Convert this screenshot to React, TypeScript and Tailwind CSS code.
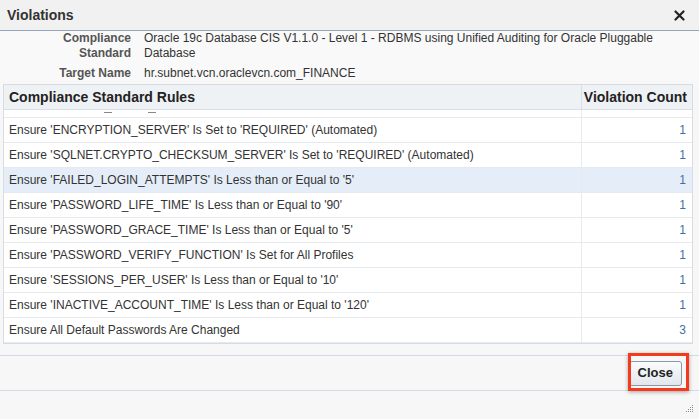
import React from 'react';

const RULES: { text: string; count: number; active?: boolean }[] = [
  { text: "Ensure 'ENCRYPTION_SERVER' Is Set to 'REQUIRED' (Automated)", count: 1 },
  { text: "Ensure 'SQLNET.CRYPTO_CHECKSUM_SERVER' Is Set to 'REQUIRED' (Automated)", count: 1 },
  { text: "Ensure 'FAILED_LOGIN_ATTEMPTS' Is Less than or Equal to '5'", count: 1, active: true },
  { text: "Ensure 'PASSWORD_LIFE_TIME' Is Less than or Equal to '90'", count: 1 },
  { text: "Ensure 'PASSWORD_GRACE_TIME' Is Less than or Equal to '5'", count: 1 },
  { text: "Ensure 'PASSWORD_VERIFY_FUNCTION' Is Set for All Profiles", count: 1 },
  { text: "Ensure 'SESSIONS_PER_USER' Is Less than or Equal to '10'", count: 1 },
  { text: "Ensure 'INACTIVE_ACCOUNT_TIME' Is Less than or Equal to '120'", count: 1 },
  { text: 'Ensure All Default Passwords Are Changed', count: 3 },
];

function Row({ text, count, active }: { text: string; count: number; active?: boolean }) {
  return (
    <div
      className={`grid h-[25px] grid-cols-[578px_1fr] border-b border-[#e6e9ed] text-[12px] ${
        active ? 'bg-[#e5eef8]' : 'bg-white'
      }`}
    >
      <div className="flex items-center border-r border-[#e6e9ed] pl-[5px] text-[#333]">{text}</div>
      <div className="flex items-center justify-end pr-[6px] text-[#3f6ea6]">{count}</div>
    </div>
  );
}

export default function App() {
  return (
    <div className="relative h-[419px] w-[699px] overflow-hidden bg-[#f7f7f7] font-['Liberation_Sans',Arial,sans-serif]">
      {/* title bar */}
      <div className="flex h-[31px] items-center justify-between border-b border-[#93a8bf] bg-[#f1f1f1] pl-[7px] pr-[14px]">
        <span className="text-[14px] font-bold text-[#333]">Violations</span>
        <svg width="11" height="11" viewBox="0 0 11 11">
          <path d="M1.5 1.5 L9.5 9.5 M9.5 1.5 L1.5 9.5" stroke="#222" strokeWidth="2.2" strokeLinecap="round" />
        </svg>
      </div>

      {/* info */}
      <div className="grid grid-cols-[131px_1fr] gap-x-[13px] gap-y-[5px] bg-[#f9f9f9] pr-[40px] text-[12px] leading-[15px]">
        <div className="text-right font-bold text-[#555]">
          Compliance
          <br />
          Standard
        </div>
        <div className="text-[#333]">
          Oracle 19c Database CIS V1.1.0 - Level 1 - RDBMS using Unified Auditing for Oracle Pluggable Database
        </div>
        <div className="text-right font-bold text-[#555]">Target Name</div>
        <div className="text-[#333]">hr.subnet.vcn.oraclevcn.com_FINANCE</div>
      </div>

      {/* table */}
      <div className="ml-[3px] mt-[3px] w-[690px] border border-[#d5dce4] bg-white">
        <div className="grid h-[25px] grid-cols-[578px_1fr] border-b border-[#d9dfe6] bg-[#eff2f5] text-[14px] font-bold text-[#222]">
          <div className="flex items-center border-r border-[#d9dfe6] pl-[5px]">Compliance Standard Rules</div>
          <div className="flex items-center justify-end pr-[5px]">Violation Count</div>
        </div>
        <div className="h-[233px] overflow-hidden">
          {/* bottom of the row scrolled out of view */}
          <div className="grid h-[8px] grid-cols-[578px_1fr] border-b border-[#e6e9ed]">
            <div className="relative border-r border-[#e6e9ed]">
              <span className="absolute left-[100px] top-[2px] h-px w-[8px] bg-[#888]" />
              <span className="absolute left-[144px] top-[2px] h-px w-[8px] bg-[#888]" />
            </div>
            <div />
          </div>
          {RULES.map((r) => (
            <Row key={r.text} {...r} />
          ))}
        </div>
      </div>

      {/* footer */}
      <div className="mt-[11px] flex h-[36px] items-center justify-end border-y border-[#d3dce5] pr-[17px]">
        <button className="h-[25px] rounded-[3px] border border-[#8d98a5] bg-gradient-to-b from-[#fafbfc] to-[#e3e7ec] px-[8px] text-[13px] font-bold text-[#222]">
          Close
        </button>
      </div>

      {/* annotation highlight */}
      <div className="pointer-events-none absolute left-[628px] top-[353px] h-[38px] w-[61px] border-[3px] border-[#f5391c] shadow-[0_1px_4px_rgba(0,0,0,0.35)]" />

      {/* resize grip */}
      <svg className="absolute bottom-[6px] right-[5px]" width="9" height="9" viewBox="0 0 9 9">
        {[
          [7, 1],
          [5, 3],
          [7, 3],
          [3, 5],
          [5, 5],
          [7, 5],
          [1, 7],
          [3, 7],
          [5, 7],
          [7, 7],
        ].map(([x, y]) => (
          <rect key={`${x}-${y}`} x={x} y={y} width="1" height="1" fill="#8a8a8a" />
        ))}
      </svg>
    </div>
  );
}
